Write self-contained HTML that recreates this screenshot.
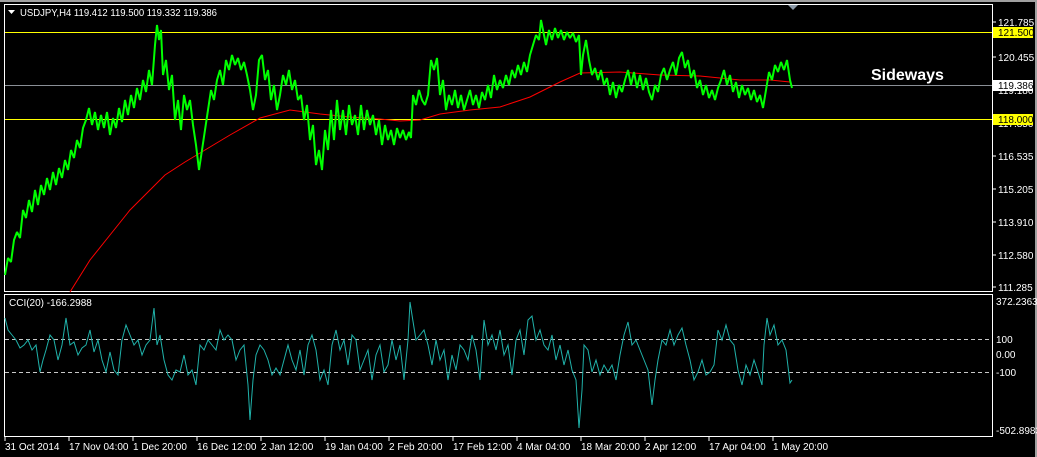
<!DOCTYPE html>
<html><head><meta charset="utf-8"><style>
html,body{margin:0;padding:0;background:#000;}
body{width:1037px;height:457px;overflow:hidden;position:relative;font-family:"Liberation Sans",sans-serif;}
svg{position:absolute;left:0;top:0;}
</style></head><body>
<svg width="1037" height="457" xmlns="http://www.w3.org/2000/svg" font-family="Liberation Sans, sans-serif" font-size="10" fill="#fff">
<rect x="0" y="0" width="1037" height="457" fill="#000"/>
<rect x="0" y="0" width="1037" height="2" fill="#a0a0a0"/>
<rect x="1035" y="0" width="2" height="457" fill="#a0a0a0"/>
<rect x="4.5" y="4.5" width="988" height="287" fill="none" stroke="#fff" stroke-width="1"/>
<rect x="4.5" y="294.5" width="988" height="142" fill="none" stroke="#fff" stroke-width="1"/>
<polygon points="788,5 798,5 793,10" fill="#8c9aa8"/>
<line x1="5" y1="32.5" x2="992" y2="32.5" stroke="#ffff00"/>
<line x1="5" y1="119.5" x2="992" y2="119.5" stroke="#ffff00"/>
<line x1="5" y1="85.5" x2="992" y2="85.5" stroke="#8a8f96"/>
<polyline fill="none" stroke="#ff0000" stroke-width="1" points="70,292 90,260 110,235 130,210 150,190 165,175 185,162 205,150 230,135 260,118 290,110 320,114 350,117 380,119 400,121 420,120 440,114 470,110 500,107 530,97 560,82 580,73 620,72 660,75 700,76 740,80 770,80 790,82"/>
<polyline fill="none" stroke="#00ff00" stroke-width="2" stroke-linejoin="bevel" points="5,275 8,258 11,262 14,240 17,232 20,238 23,210 26,218 29,200 32,212 35,190 38,205 41,185 44,195 47,178 50,190 53,172 56,185 59,168 62,178 65,160 68,170 71,150 74,158 77,140 80,148 83,128 86,120 89,108 92,125 95,112 98,130 101,115 104,128 107,112 110,135 113,118 116,128 119,108 122,122 125,100 128,115 131,95 134,108 137,88 140,100 143,80 146,92 149,70 152,85 155,45 157,25 159,40 161,30 163,75 166,60 169,90 172,75 175,120 178,100 181,130 184,95 187,110 190,100 193,125 196,145 199,170 202,150 205,130 208,110 211,90 214,100 217,80 220,70 223,85 226,60 229,70 232,55 235,65 238,58 241,70 244,62 247,75 250,90 253,110 256,95 259,60 262,55 265,80 268,70 271,100 274,85 277,110 280,95 283,75 286,85 289,70 292,90 295,80 298,100 301,95 304,120 307,105 310,140 313,125 316,165 319,150 322,170 325,130 328,150 331,110 334,140 337,100 340,130 343,110 346,135 349,105 352,125 355,115 358,135 361,105 364,130 367,110 370,125 373,115 376,135 379,120 382,145 385,125 388,140 391,130 394,145 397,128 400,138 403,130 406,140 409,132 411,138 413,95 416,105 419,90 422,100 425,105 428,95 431,60 434,70 437,58 440,95 443,80 446,110 449,95 452,105 455,90 458,108 461,95 464,110 467,100 470,90 473,105 476,95 479,108 482,92 485,100 488,85 491,98 494,75 497,90 500,80 503,88 506,75 509,85 512,70 515,78 518,65 521,75 524,62 527,72 530,55 533,45 536,35 539,40 541,20 543,30 546,45 549,30 552,40 555,28 558,38 561,30 564,40 567,32 570,38 573,33 576,42 579,35 581,75 583,55 586,40 589,60 592,75 595,68 598,80 601,70 604,85 607,78 610,95 613,82 616,98 619,85 622,92 625,80 628,70 631,85 634,72 637,88 640,75 643,90 646,78 649,92 652,100 655,85 658,92 661,75 664,68 667,80 670,70 673,62 676,75 679,58 682,52 685,68 688,60 691,78 694,70 697,88 700,80 703,95 706,85 709,98 712,90 715,100 718,88 721,80 724,70 727,85 730,75 733,92 736,82 739,98 742,85 745,95 748,88 751,100 754,90 757,102 760,95 763,108 766,90 769,72 772,80 775,65 778,72 781,62 784,70 787,60 790,80 792,88"/>
<polygon points="8,10 15,10 11.5,14" fill="#fff"/>
<text x="20" y="16" textLength="197" lengthAdjust="spacingAndGlyphs">USDJPY,H4  119.412 119.500 119.332 119.386</text>
<text x="871" y="80" font-size="16" font-weight="bold">Sideways</text>
<g font-size="10">
<text x="998" y="26">121.785</text>
<rect x="993" y="27" width="40" height="11" fill="#ffff00"/><text x="998" y="36" fill="#000">121.500</text>
<text x="998" y="61">120.455</text>
<text x="998" y="94">119.180</text>
<rect x="993" y="80" width="40" height="11" fill="#fff"/><text x="998" y="89" fill="#000">119.386</text>
<text x="998" y="127">117.850</text>
<rect x="993" y="114" width="40" height="11" fill="#ffff00"/><text x="998" y="123" fill="#000">118.000</text>
<text x="998" y="160">116.535</text>
<text x="998" y="193">115.205</text>
<text x="998" y="226">113.910</text>
<text x="998" y="259">112.580</text>
<text x="998" y="291">111.285</text>
<text x="996" y="305">372.2363</text>
<text x="996" y="343">100</text>
<text x="996" y="358">0.00</text>
<text x="996" y="376">-100</text>
<text x="996" y="434">-502.8983</text>
</g>
<g stroke="#fff">
<line x1="993" y1="22" x2="996" y2="22"/><line x1="993" y1="57" x2="996" y2="57"/><line x1="993" y1="156" x2="996" y2="156"/><line x1="993" y1="189" x2="996" y2="189"/><line x1="993" y1="222" x2="996" y2="222"/><line x1="993" y1="255" x2="996" y2="255"/><line x1="993" y1="287" x2="996" y2="287"/>
</g>
<line x1="5" y1="339.5" x2="992" y2="339.5" stroke="#c8c8c8" stroke-dasharray="4,3"/>
<line x1="5" y1="372.5" x2="992" y2="372.5" stroke="#c8c8c8" stroke-dasharray="4,3"/>
<polyline fill="none" stroke="#20b2aa" stroke-width="1" points="5,318 8,330 12,335 16,340 20,348 24,345 28,340 32,350 36,345 40,372 43,360 46,350 50,335 54,340 58,360 62,345 66,318 70,345 74,342 78,355 82,348 86,345 90,330 94,352 98,340 102,360 106,372 110,352 114,370 118,375 122,340 126,325 130,335 134,345 138,340 142,355 146,345 150,340 154,308 157,345 160,335 164,360 168,375 172,380 176,370 180,372 184,355 188,375 192,370 196,385 200,345 204,350 208,340 212,345 216,350 220,330 224,340 228,335 232,340 236,360 240,350 244,345 248,385 250,420 253,380 256,355 260,345 264,350 268,360 272,375 276,368 280,375 284,360 288,345 292,360 296,370 300,350 304,375 308,345 312,335 316,350 320,380 324,370 328,385 332,345 336,330 340,350 344,340 348,365 352,335 356,340 360,370 364,360 368,350 372,380 376,355 380,345 384,372 388,365 392,340 396,360 400,345 404,380 408,340 410,302 412,315 416,340 420,335 424,330 428,345 432,365 436,340 440,360 444,350 448,380 452,355 456,370 460,345 464,350 468,360 472,335 476,350 480,380 484,320 488,345 492,335 496,350 500,330 504,355 508,345 512,375 516,340 520,330 524,355 528,320 532,316 536,340 540,330 544,345 548,350 552,335 556,360 560,345 564,365 568,350 572,370 576,380 579,428 582,390 584,345 588,350 592,372 596,360 600,375 604,365 608,372 612,365 616,380 620,355 624,335 628,322 632,345 636,340 640,350 644,360 648,370 652,405 655,380 658,360 662,340 666,345 670,330 674,345 678,335 682,328 686,345 690,360 694,380 698,372 702,360 706,375 710,372 714,365 718,330 722,340 726,325 730,340 734,345 738,370 742,385 746,365 750,375 754,360 758,372 762,385 764,345 767,318 770,335 774,325 778,345 782,340 786,350 790,383 792,380"/>
<text x="9" y="306">CCI(20) -166.2988</text>
<g stroke="#fff">
<line x1="5" y1="437" x2="5" y2="441"/><line x1="69" y1="437" x2="69" y2="441"/><line x1="133" y1="437" x2="133" y2="441"/><line x1="197" y1="437" x2="197" y2="441"/><line x1="261" y1="437" x2="261" y2="441"/><line x1="325" y1="437" x2="325" y2="441"/><line x1="389" y1="437" x2="389" y2="441"/><line x1="453" y1="437" x2="453" y2="441"/><line x1="517" y1="437" x2="517" y2="441"/><line x1="581" y1="437" x2="581" y2="441"/><line x1="645" y1="437" x2="645" y2="441"/><line x1="709" y1="437" x2="709" y2="441"/><line x1="773" y1="437" x2="773" y2="441"/>
</g>
<g font-size="10">
<text x="5" y="450">31 Oct 2014</text>
<text x="69" y="450">17 Nov 04:00</text>
<text x="133" y="450">1 Dec 20:00</text>
<text x="197" y="450">16 Dec 12:00</text>
<text x="261" y="450">2 Jan 12:00</text>
<text x="325" y="450">19 Jan 04:00</text>
<text x="389" y="450">2 Feb 20:00</text>
<text x="453" y="450">17 Feb 12:00</text>
<text x="517" y="450">4 Mar 04:00</text>
<text x="581" y="450">18 Mar 20:00</text>
<text x="645" y="450">2 Apr 12:00</text>
<text x="709" y="450">17 Apr 04:00</text>
<text x="773" y="450">1 May 20:00</text>
</g>
</svg>
</body></html>
